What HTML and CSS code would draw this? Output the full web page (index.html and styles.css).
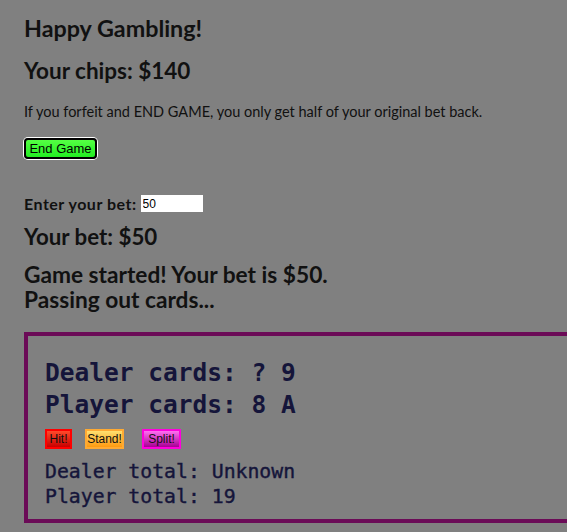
FILE: index.html
```html
<!DOCTYPE html>
<html>
<head>
<meta charset="utf-8">
<link rel="stylesheet" href="styles.css">
</head>
<body>
<div class="page">
  <h1 class="title">Happy Gambling!</h1>
  <h2 class="chips">Your chips: $140</h2>
  <p class="note">If you forfeit and END GAME, you only get half of your original bet back.</p>
  <button class="end-btn">End Game</button>
  <div class="bet-row">
    <label class="bet-label">Enter your bet:</label>
    <input class="bet-input" type="text" value="50">
  </div>
  <h2 class="bet">Your bet: $50</h2>
  <h2 class="status">Game started! Your bet is $50.<br>Passing out cards...</h2>
  <div class="table">
    <div class="cards">Dealer cards: ? 9</div>
    <div class="cards">Player cards: 8 A</div>
    <div class="actions">
      <button class="act hit">Hit!</button>
      <button class="act stand">Stand!</button>
      <button class="act split">Split!</button>
    </div>
    <div class="total">Dealer total: Unknown</div>
    <div class="total">Player total: 19</div>
  </div>
</div>
</body>
</html>
```
FILE: styles.css
```css
html, body {
  margin: 0;
  padding: 0;
  background: #808080;
  overflow: hidden;
}
.page {
  padding: 0 0 0 24px;
  font-family: Lato, "Open Sans", sans-serif;
  color: #111;
}
.title {
  margin: 0;
  padding-top: 14px;
  font-size: 23.3px;
  line-height: 28px;
  font-weight: 700;
}
.chips {
  margin: 15px 0 0;
  font-size: 22.5px;
  line-height: 28px;
  font-weight: 700;
}
.note {
  margin: 17px 0 0;
  font-size: 14.5px;
  line-height: 20px;
}
.end-btn {
  display: block;
  margin-top: 16px;
  width: 73px;
  height: 21px;
  padding: 0;
  font-family: "Liberation Sans", Arial, sans-serif;
  font-size: 13px;
  color: #000;
  background: linear-gradient(#55ff44, #22ee22);
  border: 2px solid #000;
  border-radius: 4px;
  box-shadow: 0 0 0 1px #fff;
}
.bet-row {
  display: flex;
  align-items: center;
  gap: 4px;
  margin-top: 36px;
  height: 17px;
}
.bet-label {
  font-size: 16px;
  letter-spacing: 0.5px;
  font-weight: 700;
}
.bet-input {
  width: 62px;
  height: 17px;
  box-sizing: border-box;
  border: none;
  padding: 0 2px;
  font-family: "Liberation Sans", Arial, sans-serif;
  font-size: 12px;
  background: #fff;
  color: #000;
}
.bet {
  margin: 12px 0 0;
  font-size: 22.3px;
  line-height: 26px;
  font-weight: 700;
}
.status {
  margin: 12px 0 0;
  font-size: 22.7px;
  line-height: 25px;
  font-weight: 700;
}
.table {
  margin-top: 20px;
  width: 560px;
  border: 4px solid #6b0b57;
  padding: 21px 0 10px 17px;
  font-family: "DejaVu Sans Mono", monospace;
  color: #15153a;
}
.cards {
  font-size: 24.5px;
  line-height: 32px;
  font-weight: 700;
}
.actions {
  display: flex;
  margin: 8px 0 10px;
}
.act {
  height: 20px;
  padding: 0;
  font-family: "Liberation Sans", Arial, sans-serif;
  font-size: 12px;
  color: #111;
  border-width: 2px;
  border-style: solid;
  border-radius: 0;
}
.hit {
  width: 27px;
  background: linear-gradient(#ff4a2a, #c80000);
  border-color: #ff0000;
}
.stand {
  width: 39px;
  margin-left: 13px;
  background: linear-gradient(#ffe070, #ff9a10);
  border-color: #ffaa33;
}
.split {
  width: 39px;
  margin-left: 18px;
  background: linear-gradient(#ff70f0, #a80094);
  border-color: #ff00dd;
}
.total {
  font-size: 19.8px;
  line-height: 25px;
  font-weight: 400;
  -webkit-text-stroke: 0.4px #15153a;
}
```
